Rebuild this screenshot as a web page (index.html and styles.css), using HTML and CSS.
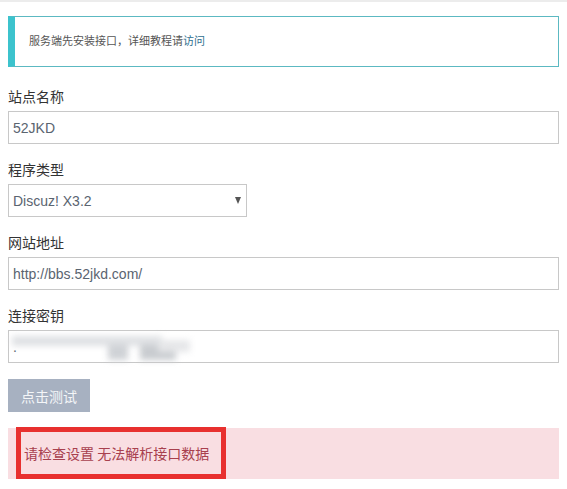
FILE: index.html
```html
<!DOCTYPE html>
<html lang="zh-CN">
<head>
    <meta charset="UTF-8">
    <meta name="viewport" content="width=device-width, initial-scale=1.0">
    <title>站点设置</title>
    <link rel="stylesheet" href="styles.css">
</head>
<body>
    <div class="page">
        <div class="tip-box">
            服务端先安装接口，详细教程请<a href="#">访问</a>
        </div>

        <div class="form-group">
            <label>站点名称</label>
            <input class="field" type="text" value="52JKD">
        </div>

        <div class="form-group">
            <label>程序类型</label>
            <div class="select-wrap">
                <select class="field">
                    <option>Discuz! X3.2</option>
                </select>
            </div>
        </div>

        <div class="form-group">
            <label>网站地址</label>
            <input class="field" type="text" value="http://bbs.52jkd.com/">
        </div>

        <div class="form-group">
            <label>连接密钥</label>
            <div class="key-wrap">
                <input class="field" type="text" value=".">
                <div class="key-blur">
                    <span class="b1"></span>
                    <span class="b2"></span>
                    <span class="b3"></span>
                    <span class="b4"></span>
                </div>
            </div>
        </div>

        <button class="test-btn">点击测试</button>

        <div class="error-box">
            <span class="error-mark">请检查设置 无法解析接口数据</span>
        </div>
    </div>
</body>
</html>
```

FILE: styles.css
```css
body {
    margin: 0;
    font-family: "Liberation Sans", "Noto Sans CJK SC", sans-serif;
    background-color: #fff;
    color: #333;
}

.page {
    border-top: 2px solid #ececec;
    padding: 14px 8px 0 8px;
    width: 551px;
}

.tip-box {
    height: 49px;
    line-height: 49px;
    border: 1px solid #5cb9c2;
    border-left: 7px solid #3cc3cd;
    padding-left: 14px;
    font-size: 11px;
    color: #555;
    margin-bottom: 20px;
}

.tip-box a {
    color: #2f6f8f;
    text-decoration: none;
}

.form-group {
    margin-bottom: 16px;
}

.form-group label {
    display: block;
    font-size: 14px;
    line-height: 20px;
    height: 20px;
    margin-bottom: 4px;
    color: #333;
}

.field {
    display: block;
    box-sizing: border-box;
    width: 100%;
    height: 33px;
    border: 1px solid #c8c8c8;
    padding: 0 4px;
    font-family: "Liberation Sans", "Noto Sans CJK SC", sans-serif;
    font-size: 14px;
    color: #5a6470;
    background-color: #fff;
    outline: none;
}

.select-wrap {
    position: relative;
    width: 239px;
}

.select-wrap select {
    -webkit-appearance: none;
    appearance: none;
    border-radius: 0;
}

.select-wrap::after {
    content: "";
    position: absolute;
    right: 6px;
    top: 13px;
    border-left: 3.5px solid transparent;
    border-right: 3.5px solid transparent;
    border-top: 7px solid #555;
}

.key-wrap {
    position: relative;
}

.key-blur {
    position: absolute;
    left: 0;
    top: 0;
    width: 200px;
    height: 33px;
    filter: blur(3px);
}

.key-blur span {
    position: absolute;
    background-color: #cfd2d6;
}

.key-blur .b1 {
    left: 4px;
    top: 6px;
    width: 150px;
    height: 10px;
    background-color: #dfe1e4;
}

.key-blur .b2 {
    left: 100px;
    top: 15px;
    width: 20px;
    height: 15px;
}

.key-blur .b3 {
    left: 132px;
    top: 15px;
    width: 36px;
    height: 15px;
    background-color: #c9ccd0;
}

.key-blur .b4 {
    left: 150px;
    top: 10px;
    width: 32px;
    height: 12px;
    background-color: #e6e7e9;
}

.test-btn {
    display: block;
    height: 33px;
    width: 82px;
    border: none;
    background-color: #a7b1c1;
    color: #f4f6f8;
    font-family: "Noto Sans CJK SC", sans-serif;
    font-size: 14px;
    padding: 0;
    margin-bottom: 16px;
    cursor: pointer;
}

.error-box {
    height: 51px;
    background-color: #f9dee2;
    padding-left: 8px;
}

.error-mark {
    display: inline-block;
    margin-top: -1px;
    border: 5px solid #e8302f;
    padding: 0 12px 0 3px;
    height: 42px;
    line-height: 42px;
    font-family: "Noto Sans CJK SC", sans-serif;
    font-size: 14px;
    color: #a8404e;
}
```
